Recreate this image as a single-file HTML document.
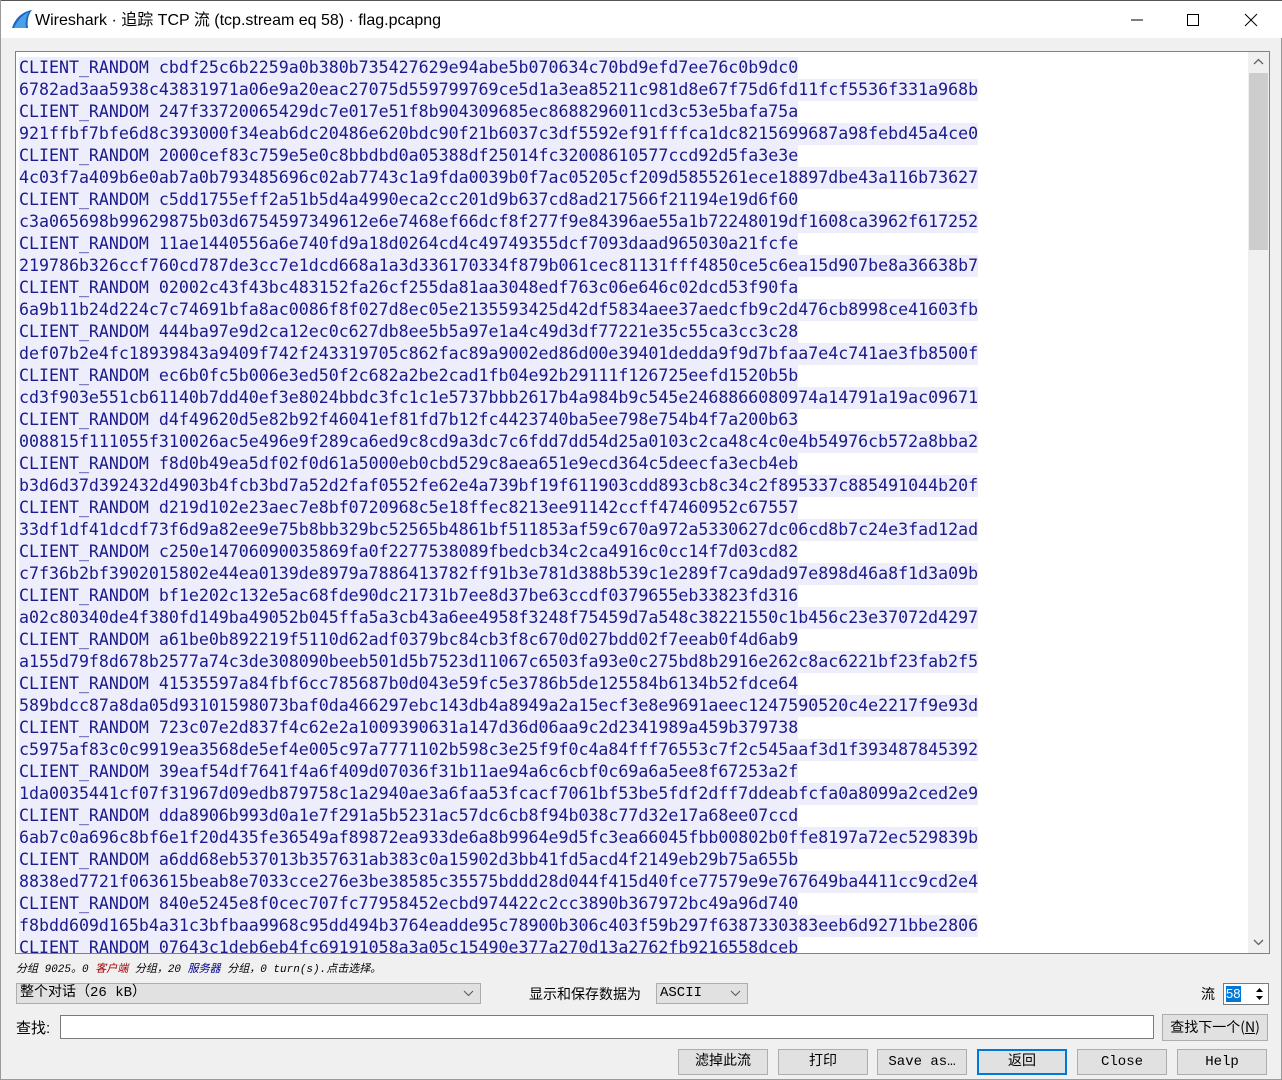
<!DOCTYPE html>
<html><head><meta charset="utf-8">
<style>
*{margin:0;padding:0;box-sizing:border-box}
html,body{width:1282px;height:1080px;overflow:hidden;background:#f0f0f0;font-family:"Liberation Sans","Noto Sans CJK SC",sans-serif}
.win{position:absolute;left:0;top:0;width:1282px;height:1080px;border:1px solid #9a9a9a;border-top:none;background:#f0f0f0}
.title{position:absolute;left:0;top:0;width:1282px;height:38px;background:#fff;border-top:1px solid #555}
.title .t{position:absolute;left:34px;top:5px;font-size:16px;color:#000;font-family:"Liberation Sans","Noto Sans CJK SC",sans-serif}
.ctl{position:absolute;top:0;height:38px;width:46px}
.box{position:absolute;left:14px;top:51px;width:1255px;height:903px;border:1px solid #828282;background:#fff;overflow:hidden}
.txt{position:absolute;left:3px;top:5px;font-family:"DejaVu Sans Mono","Liberation Mono",monospace;font-size:16.6px;color:#1a1a8c}
.txt div{height:22px;line-height:22px;white-space:pre}
.txt span{background:#ededfb;display:inline-block;height:22px}
.sb{position:absolute;left:1232px;top:0;width:21px;height:901px;background:#f0f0f0}
.thumb{position:absolute;left:1px;top:21px;width:19px;height:177px;background:#cdcdcd}
.stat{position:absolute;left:15px;top:960px;font-size:11px;font-style:italic;color:#000;font-family:"Liberation Mono","Noto Sans CJK SC",monospace}
.sel{position:absolute;border:1px solid #adadad;background:#e1e1e1;font-size:14px;padding-left:3px;line-height:18px}
.btn{position:absolute;top:1049px;height:26px;width:90px;border:1px solid #adadad;background:#e1e1e1;text-align:center;line-height:24px;font-size:14px;font-family:"Liberation Mono","Noto Sans CJK SC",monospace}
.lbl{position:absolute;font-size:14px;font-family:"Liberation Sans","Noto Sans CJK SC",sans-serif}
</style></head><body>
<div class="win">
<div class="title">
<svg style="position:absolute;left:10px;top:8px" width="22" height="20" viewBox="0 0 22 20"><path d="M1 19 C4 10 10 3 21 1 C17 6 16 12 17 19 Z" fill="#1a66c2"/><path d="M3 19 C6 12 11 6 18 3 C15 8 14 13 15 19Z" fill="#4aa0e8"/></svg>
<div class="t">Wireshark · 追踪 TCP 流 (tcp.stream eq 58) · flag.pcapng</div>
<svg class="ctl" style="left:1112px" viewBox="0 0 46 38"><line x1="18" y1="19" x2="30" y2="19" stroke="#000"/></svg>
<svg class="ctl" style="left:1169px" viewBox="0 0 46 38"><rect x="17.5" y="13.5" width="11" height="11" fill="none" stroke="#000"/></svg>
<svg class="ctl" style="left:1227px" viewBox="0 0 46 38"><path d="M17 13 L29 25 M29 13 L17 25" stroke="#000"/></svg>
</div>
<div class="box">
<div class="txt">
<div><span>CLIENT_RANDOM cbdf25c6b2259a0b380b735427629e94abe5b070634c70bd9efd7ee76c0b9dc0</span></div>
<div><span>6782ad3aa5938c43831971a06e9a20eac27075d559799769ce5d1a3ea85211c981d8e67f75d6fd11fcf5536f331a968b</span></div>
<div><span>CLIENT_RANDOM 247f33720065429dc7e017e51f8b904309685ec8688296011cd3c53e5bafa75a</span></div>
<div><span>921ffbf7bfe6d8c393000f34eab6dc20486e620bdc90f21b6037c3df5592ef91fffca1dc8215699687a98febd45a4ce0</span></div>
<div><span>CLIENT_RANDOM 2000cef83c759e5e0c8bbdbd0a05388df25014fc32008610577ccd92d5fa3e3e</span></div>
<div><span>4c03f7a409b6e0ab7a0b793485696c02ab7743c1a9fda0039b0f7ac05205cf209d5855261ece18897dbe43a116b73627</span></div>
<div><span>CLIENT_RANDOM c5dd1755eff2a51b5d4a4990eca2cc201d9b637cd8ad217566f21194e19d6f60</span></div>
<div><span>c3a065698b99629875b03d6754597349612e6e7468ef66dcf8f277f9e84396ae55a1b72248019df1608ca3962f617252</span></div>
<div><span>CLIENT_RANDOM 11ae1440556a6e740fd9a18d0264cd4c49749355dcf7093daad965030a21fcfe</span></div>
<div><span>219786b326ccf760cd787de3cc7e1dcd668a1a3d336170334f879b061cec81131fff4850ce5c6ea15d907be8a36638b7</span></div>
<div><span>CLIENT_RANDOM 02002c43f43bc483152fa26cf255da81aa3048edf763c06e646c02dcd53f90fa</span></div>
<div><span>6a9b11b24d224c7c74691bfa8ac0086f8f027d8ec05e2135593425d42df5834aee37aedcfb9c2d476cb8998ce41603fb</span></div>
<div><span>CLIENT_RANDOM 444ba97e9d2ca12ec0c627db8ee5b5a97e1a4c49d3df77221e35c55ca3cc3c28</span></div>
<div><span>def07b2e4fc18939843a9409f742f243319705c862fac89a9002ed86d00e39401dedda9f9d7bfaa7e4c741ae3fb8500f</span></div>
<div><span>CLIENT_RANDOM ec6b0fc5b006e3ed50f2c682a2be2cad1fb04e92b29111f126725eefd1520b5b</span></div>
<div><span>cd3f903e551cb61140b7dd40ef3e8024bbdc3fc1c1e5737bbb2617b4a984b9c545e2468866080974a14791a19ac09671</span></div>
<div><span>CLIENT_RANDOM d4f49620d5e82b92f46041ef81fd7b12fc4423740ba5ee798e754b4f7a200b63</span></div>
<div><span>008815f111055f310026ac5e496e9f289ca6ed9c8cd9a3dc7c6fdd7dd54d25a0103c2ca48c4c0e4b54976cb572a8bba2</span></div>
<div><span>CLIENT_RANDOM f8d0b49ea5df02f0d61a5000eb0cbd529c8aea651e9ecd364c5deecfa3ecb4eb</span></div>
<div><span>b3d6d37d392432d4903b4fcb3bd7a52d2faf0552fe62e4a739bf19f611903cdd893cb8c34c2f895337c885491044b20f</span></div>
<div><span>CLIENT_RANDOM d219d102e23aec7e8bf0720968c5e18ffec8213ee91142ccff47460952c67557</span></div>
<div><span>33df1df41dcdf73f6d9a82ee9e75b8bb329bc52565b4861bf511853af59c670a972a5330627dc06cd8b7c24e3fad12ad</span></div>
<div><span>CLIENT_RANDOM c250e14706090035869fa0f2277538089fbedcb34c2ca4916c0cc14f7d03cd82</span></div>
<div><span>c7f36b2bf3902015802e44ea0139de8979a7886413782ff91b3e781d388b539c1e289f7ca9dad97e898d46a8f1d3a09b</span></div>
<div><span>CLIENT_RANDOM bf1e202c132e5ac68fde90dc21731b7ee8d37be63ccdf0379655eb33823fd316</span></div>
<div><span>a02c80340de4f380fd149ba49052b045ffa5a3cb43a6ee4958f3248f75459d7a548c38221550c1b456c23e37072d4297</span></div>
<div><span>CLIENT_RANDOM a61be0b892219f5110d62adf0379bc84cb3f8c670d027bdd02f7eeab0f4d6ab9</span></div>
<div><span>a155d79f8d678b2577a74c3de308090beeb501d5b7523d11067c6503fa93e0c275bd8b2916e262c8ac6221bf23fab2f5</span></div>
<div><span>CLIENT_RANDOM 41535597a84fbf6cc785687b0d043e59fc5e3786b5de125584b6134b52fdce64</span></div>
<div><span>589bdcc87a8da05d93101598073baf0da466297ebc143db4a8949a2a15ecf3e8e9691aeec1247590520c4e2217f9e93d</span></div>
<div><span>CLIENT_RANDOM 723c07e2d837f4c62e2a1009390631a147d36d06aa9c2d2341989a459b379738</span></div>
<div><span>c5975af83c0c9919ea3568de5ef4e005c97a7771102b598c3e25f9f0c4a84fff76553c7f2c545aaf3d1f393487845392</span></div>
<div><span>CLIENT_RANDOM 39eaf54df7641f4a6f409d07036f31b11ae94a6c6cbf0c69a6a5ee8f67253a2f</span></div>
<div><span>1da0035441cf07f31967d09edb879758c1a2940ae3a6faa53fcacf7061bf53be5fdf2dff7ddeabfcfa0a8099a2ced2e9</span></div>
<div><span>CLIENT_RANDOM dda8906b993d0a1e7f291a5b5231ac57dc6cb8f94b038c77d32e17a68ee07ccd</span></div>
<div><span>6ab7c0a696c8bf6e1f20d435fe36549af89872ea933de6a8b9964e9d5fc3ea66045fbb00802b0ffe8197a72ec529839b</span></div>
<div><span>CLIENT_RANDOM a6dd68eb537013b357631ab383c0a15902d3bb41fd5acd4f2149eb29b75a655b</span></div>
<div><span>8838ed7721f063615beab8e7033cce276e3be38585c35575bddd28d044f415d40fce77579e9e767649ba4411cc9cd2e4</span></div>
<div><span>CLIENT_RANDOM 840e5245e8f0cec707fc77958452ecbd974422c2cc3890b367972bc49a96d740</span></div>
<div><span>f8bdd609d165b4a31c3bfbaa9968c95dd494b3764eadde95c78900b306c403f59b297f6387330383eeb6d9271bbe2806</span></div>
<div><span>CLIENT_RANDOM 07643c1deb6eb4fc69191058a3a05c15490e377a270d13a2762fb9216558dceb</span></div>
</div>
<div class="sb"><svg style="position:absolute;left:5px;top:6px" width="11" height="8"><path d="M1 6 L5.5 1.5 L10 6" fill="none" stroke="#606060" stroke-width="1.3"/></svg><div class="thumb"></div><svg style="position:absolute;left:5px;top:886px" width="11" height="8"><path d="M1 2 L5.5 6.5 L10 2" fill="none" stroke="#606060" stroke-width="1.3"/></svg></div>
</div>
<div class="stat">分组 9025。0 <span style="color:#a00000">客户端</span> 分组，20 <span style="color:#00008c">服务器</span> 分组，0 turn(s).点击选择。</div>
<div class="sel" style="left:15px;top:983px;width:465px;height:21px;font-family:'Liberation Mono','Noto Sans CJK SC',monospace">整个对话（26 kB）<svg style="position:absolute;right:6px;top:6px" width="11" height="7"><path d="M1 1 L5.5 5.5 L10 1" fill="none" stroke="#555"/></svg></div>
<div class="lbl" style="left:528px;top:984px">显示和保存数据为</div>
<div class="sel" style="left:655px;top:983px;width:92px;height:21px;font-family:'Liberation Mono',monospace">ASCII<svg style="position:absolute;right:6px;top:6px" width="11" height="7"><path d="M1 1 L5.5 5.5 L10 1" fill="none" stroke="#555"/></svg></div>
<div class="lbl" style="left:1200px;top:984px">流</div>
<div style="position:absolute;left:1222px;top:983px;width:46px;height:22px;border:1px solid #7a7a7a;background:#fff"><span style="position:absolute;left:2px;top:2px;height:16px;width:15px;background:#0078d7;color:#fff;font-size:13px;line-height:16px">58</span>
<svg style="position:absolute;left:28px;top:1px" width="15" height="18"><path d="M4 7 L7.5 3 L11 7Z M4 11 L7.5 15 L11 11Z" fill="#000"/></svg></div>
<div class="lbl" style="left:15px;top:1017px;font-size:15px">查找:</div>
<div style="position:absolute;left:59px;top:1015px;width:1094px;height:24px;border:1px solid #7a7a7a;background:#fff"></div>
<div class="btn" style="left:1161px;top:1014px;width:106px;height:27px;line-height:25px;font-family:'Noto Sans CJK SC',sans-serif">查找下一个(<u>N</u>)</div>
<div class="btn" style="left:677px">滤掉此流</div>
<div class="btn" style="left:777px">打印</div>
<div class="btn" style="left:876px">Save as…</div>
<div class="btn" style="left:976px;border:2px solid #0078d7;line-height:22px">返回</div>
<div class="btn" style="left:1076px">Close</div>
<div class="btn" style="left:1176px">Help</div>
</div>
</body></html>
